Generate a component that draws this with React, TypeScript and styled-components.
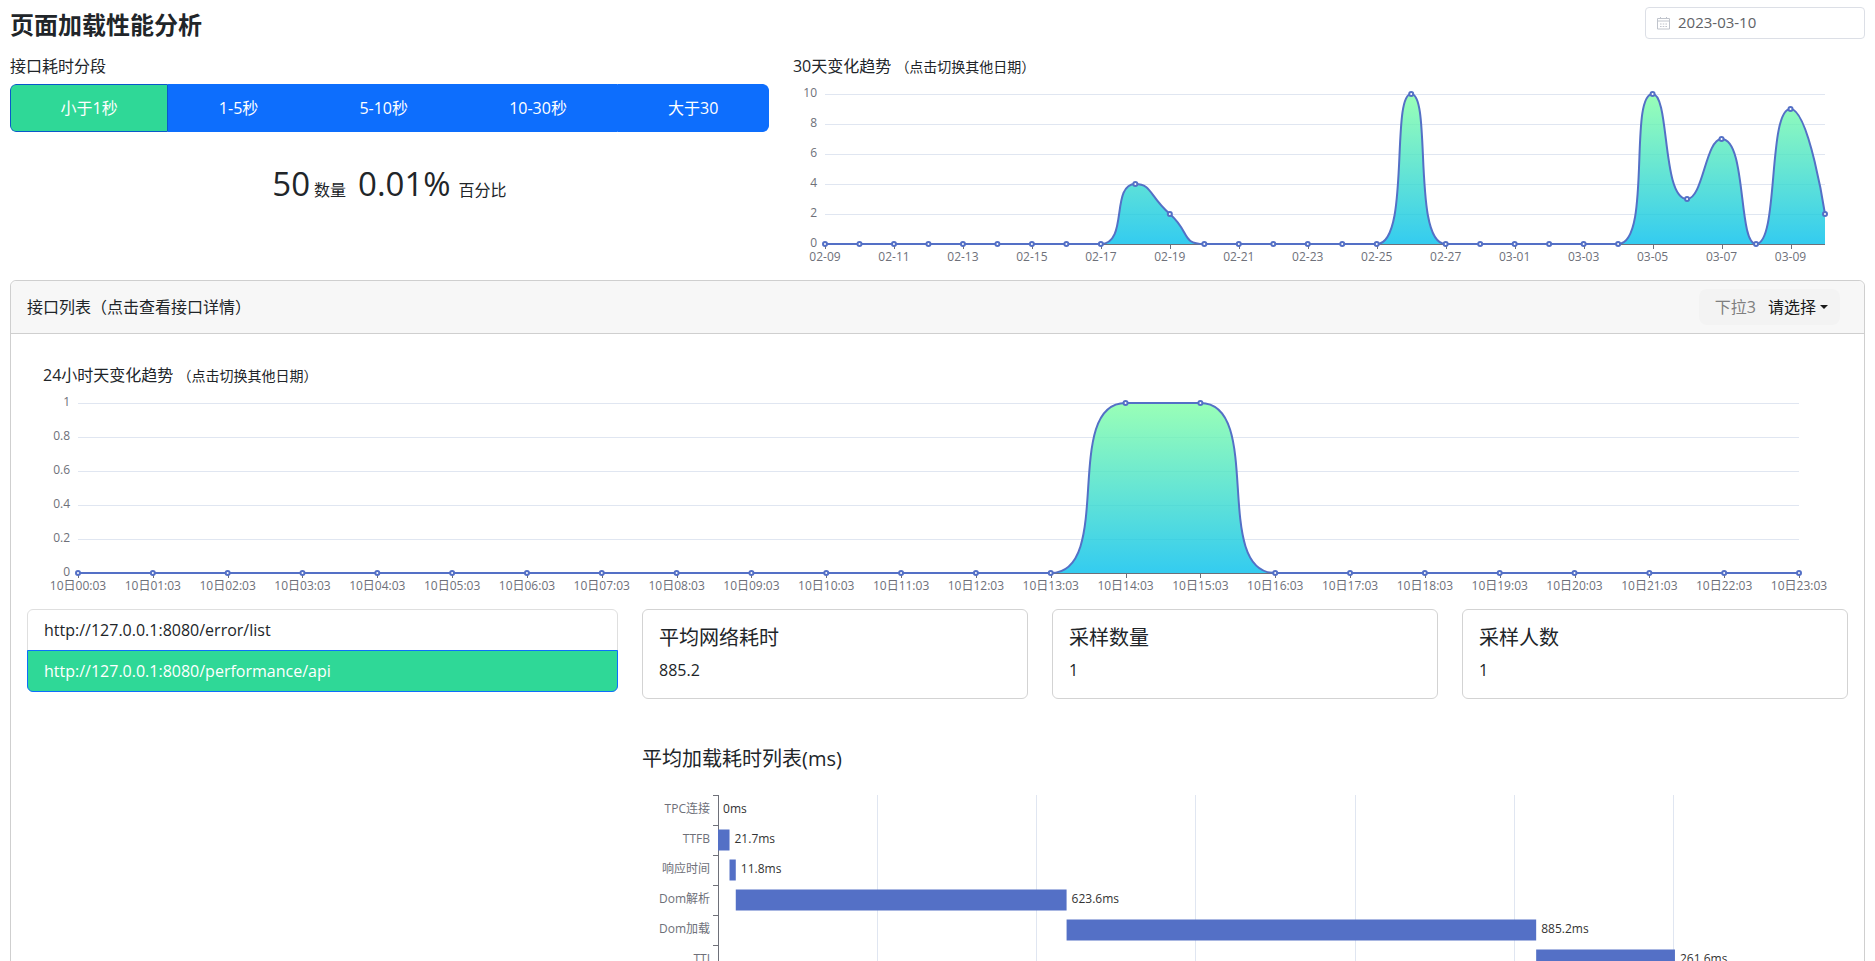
import React, { useId, useLayoutEffect, useRef, useState } from 'react';
import styled, { createGlobalStyle, css } from 'styled-components';

const GlobalStyle = createGlobalStyle`
  *, *::before, *::after { box-sizing: border-box; }
  body {
    margin: 0;
    background: #fff;
    color: #212529;
    font-family: "Open Sans", "Noto Sans CJK SC", sans-serif;
    font-size: 16px;
    line-height: 24px;
  }
  h1, h2, h3, p, ul, dl, dd { margin: 0; padding: 0; }
  button, input, select { font: inherit; color: inherit; }
`;

const chartFont = css`
  font-family: "Open Sans", "Noto Sans CJK SC", sans-serif;
  font-size: 12px;
`;

const Page = styled.main`
  height: 100vh;
  overflow-y: auto;
  scrollbar-width: none;
  padding: 7px 10px 0;
`;

const TopBar = styled.header`
  display: flex;
  align-items: flex-start;
  justify-content: space-between;
`;

const PageTitle = styled.h1`
  padding-top: 4px;
  font-size: 24px;
  font-weight: 700;
  line-height: 28px;
`;

const DateBox = styled.label`
  display: flex;
  align-items: center;
  gap: 8px;
  width: 220px;
  height: 32px;
  padding: 0 11px;
  border: 1px solid #dcdfe6;
  border-radius: 4px;
  color: #606266;
  font-size: 15px;
`;

const DateInput = styled.input`
  flex: 1;
  min-width: 0;
  padding: 0 0 2px;
  border: 0;
  outline: 0;
  background: transparent;
  line-height: 20px;
`;

const Row = styled.div`
  display: flex;
  margin: 0 -12px;
`;

const Col = styled.section<{ $span: number }>`
  flex: 0 0 calc(100% * ${p => p.$span} / 12);
  min-width: 0;
  padding: 0 12px;
`;

const Overview = styled(Row)`
  padding-top: 15px;
`;

const SectionLabel = styled.h2`
  font-size: 16px;
  font-weight: 400;
  line-height: 24px;
  white-space: nowrap;
`;

const Hint = styled.small`
  font-size: 14px;
`;

const Segments = styled.div`
  display: flex;
  margin-top: 6px;
  border-radius: 6px;
  overflow: hidden;
`;

const Segment = styled.button<{ $active?: boolean }>`
  flex: 1 1 auto;
  height: 48px;
  padding: 0;
  border: 1px solid ${p => (p.$active ? '#0a58ca' : '#0d6efd')};
  background: ${p => (p.$active ? '#2fd897' : '#0d6efd')};
  color: #fff;
  cursor: pointer;
  &:first-child { border-radius: 6px 0 0 6px; }
  &:last-child { border-radius: 0 6px 6px 0; }
`;

const Totals = styled.div`
  display: flex;
  align-items: baseline;
  justify-content: center;
  gap: 12px;
  margin-top: 28px;
  line-height: 48px;
`;

const Total = styled.p<{ $gap: number }>`
  display: flex;
  align-items: baseline;
  gap: ${p => p.$gap}px;
`;

const Figure = styled.span`
  font-size: 33px;
`;

const Plot = styled.svg`
  display: block;
  width: 100%;
  text { ${chartFont} fill: #6e7079; }
  text.value { fill: #333; }
`;

const Panel = styled.section`
  margin-top: 8px;
  border: 1px solid #cfcfcf;
  border-radius: 6px;
`;

const PanelHeader = styled.header`
  display: flex;
  align-items: center;
  justify-content: space-between;
  padding: 8px 24px 8px 16px;
  border-bottom: 1px solid #cfcfcf;
  border-radius: 6px 6px 0 0;
  background: #f7f7f7;
`;

const Picker = styled.div`
  display: flex;
  align-items: center;
  height: 36px;
  padding: 0 12px 0 16px;
  border-radius: 8px;
  background: #f3f3f3;
`;

const PickerLabel = styled.label`
  padding-right: 12px;
  color: #7f7f7f;
`;

const PickerSelect = styled.select`
  appearance: none;
  padding: 0;
  border: 0;
  background: transparent;
  color: #1a1a1a;
  cursor: pointer;
`;

const Caret = styled.span`
  margin-left: 3px;
  border: 4px solid transparent;
  border-top-color: #1a1a1a;
  border-bottom: 0;
  pointer-events: none;
`;

const PanelBody = styled.div`
  padding: 29px 16px 16px;
`;

const HourlyTrend = styled.div`
  padding: 0 16px;
`;

const Details = styled(Row)`
  padding-top: 8px;
`;

const UrlList = styled.ul`
  list-style: none;
  border: 1px solid #dfdfdf;
  border-radius: 6px;
`;

const UrlItem = styled.li<{ $active?: boolean }>`
  ${p => p.$active && css`
    margin: 0 -1px -1px;
    border: 1px solid #0d6efd;
    border-radius: 0 0 6px 6px;
    background: #2fd897;
    color: #fff;
  `}
`;

const UrlLink = styled.a`
  display: block;
  padding: 8px 16px;
  color: inherit;
  text-decoration: none;
`;

const Cards = styled.dl`
  display: grid;
  grid-template-columns: repeat(3, 1fr);
  gap: 24px;
`;

const Card = styled.div`
  padding: 16px;
  border: 1px solid #d3d3d3;
  border-radius: 6px;
`;

const CardTitle = styled.dt`
  margin-bottom: 8px;
  font-size: 20px;
`;

const CardValue = styled.dd`
  font-size: 16px;
`;

const ListTitle = styled.h3`
  margin: 48px 0 24px;
  font-size: 20px;
  font-weight: 400;
`;

function useWidth(initial: number) {
  const ref = useRef<SVGSVGElement>(null);
  const [width, setWidth] = useState(initial);
  useLayoutEffect(() => {
    const el = ref.current;
    if (!el) return;
    const read = () => setWidth(Math.round(el.getBoundingClientRect().width));
    read();
    const watcher = new ResizeObserver(read);
    watcher.observe(el);
    return () => watcher.disconnect();
  }, []);
  return [ref, width] as const;
}

type Point = [number, number];

const SMOOTH = 0.6;

const clamp = (v: number, a: number, b: number) =>
  Math.max(Math.min(v, Math.max(a, b)), Math.min(a, b));

/* Smooth curve whose control points stay inside the box of each segment. */
function smoothPath(points: Point[]) {
  let d = `M${points[0][0]} ${points[0][1]}`;
  let [c0x, c0y] = points[0];
  for (let i = 1; i < points.length; i++) {
    const [px, py] = points[i - 1];
    const [x, y] = points[i];
    let c1x = x;
    let c1y = y;
    let n0x = x;
    let n0y = y;
    if (i < points.length - 1) {
      const [nx, ny] = points[i + 1];
      const before = Math.hypot(x - px, y - py);
      const after = Math.hypot(nx - x, ny - y);
      const ratio = after / (after + before);
      n0x = clamp(x + (nx - px) * SMOOTH * ratio, x, nx);
      n0y = clamp(y + (ny - py) * SMOOTH * ratio, y, ny);
      c1x = clamp(x - ((n0x - x) * before) / after, px, x);
      c1y = clamp(y - ((n0y - y) * before) / after, py, y);
      n0x = x + ((x - c1x) * after) / before;
      n0y = y + ((y - c1y) * after) / before;
    }
    d += `C${c0x} ${c0y} ${c1x} ${c1y} ${x} ${y}`;
    c0x = n0x;
    c0y = n0y;
  }
  return d;
}

interface TrendProps {
  title: string;
  labels: string[];
  values: number[];
  ticks: number[];
  step: number;
  every: number;
  left: number;
  right: number;
}

function TrendChart({ title, labels, values, ticks, step, every, left, right }: TrendProps) {
  const [ref, width] = useWidth(1000);
  const gradient = useId();
  const top = 15;
  const base = top + step * (ticks.length - 1);
  const max = ticks[ticks.length - 1];
  const end = width - right;
  const xAt = (i: number) => left + ((end - left) * i) / (values.length - 1);
  const points = values.map((v, i): Point => [xAt(i), base - ((base - top) * v) / max]);
  const line = smoothPath(points);
  return (
    <Plot ref={ref} height={base + 28} role="img" aria-label={title}>
      <defs>
        <linearGradient id={gradient} x1="0" y1="0" x2="0" y2="1">
          <stop offset="0" stopColor="#80ffa5" />
          <stop offset="1" stopColor="#01bfec" />
        </linearGradient>
      </defs>
      {ticks.map((t, i) => (
        <g key={t}>
          <text x={left - 8} y={base - i * step + 3} textAnchor="end">{t}</text>
          <line x1={left} x2={end} y1={base - i * step + 0.5} y2={base - i * step + 0.5} stroke={i ? '#e0e6f1' : '#6e7079'} />
        </g>
      ))}
      {labels.map((label, i) => i % every === 0 && (
        <g key={label}>
          <line x1={Math.round(xAt(i)) + 0.5} x2={Math.round(xAt(i)) + 0.5} y1={base} y2={base + 5} stroke="#6e7079" />
          <text x={xAt(i)} y={base + 17} textAnchor="middle">{label}</text>
        </g>
      ))}
      <path d={`${line}L${end} ${base}L${left} ${base}Z`} fill={`url(#${gradient})`} opacity="0.8" />
      <path d={line} fill="none" stroke="#5470c6" strokeWidth="2" />
      {points.map(([x, y], i) => (
        <circle key={labels[i]} cx={x} cy={y} r="2" fill="#fff" stroke="#5470c6" strokeWidth="2" />
      ))}
    </Plot>
  );
}

const stages = [
  { name: 'TPC连接', ms: 0 },
  { name: 'TTFB', ms: 21.7 },
  { name: '响应时间', ms: 11.8 },
  { name: 'Dom解析', ms: 623.6 },
  { name: 'Dom加载', ms: 885.2 },
  { name: 'TTI', ms: 261.6 },
];

function WaterfallChart() {
  const [ref, width] = useWidth(1206);
  const axis = 76;
  const rowHeight = 30;
  const height = stages.length * rowHeight;
  const scale = (width - axis - 173) / 1804;
  let total = 0;
  const bars = stages.map(stage => {
    const start = total;
    total += stage.ms;
    return { ...stage, start };
  });
  return (
    <Plot ref={ref} height={height + 2} role="img" aria-label="平均加载耗时列表">
      {[300, 600, 900, 1200, 1500, 1800].map(ms => {
        const x = Math.round(axis + ms * scale) + 0.5;
        return <line key={ms} x1={x} x2={x} y1="0" y2={height} stroke="#e0e6f1" />;
      })}
      <line x1={axis + 0.5} x2={axis + 0.5} y1="0" y2={height + 1} stroke="#6e7079" />
      {bars.map((bar, i) => {
        const middle = i * rowHeight + 15;
        const x = axis + bar.start * scale;
        return (
          <g key={bar.name}>
            <line x1={axis - 5} x2={axis} y1={i * rowHeight + 0.5} y2={i * rowHeight + 0.5} stroke="#6e7079" />
            <text x={axis - 8} y={middle + 3} textAnchor="end">{bar.name}</text>
            <rect x={x} y={middle - 10.5} width={bar.ms * scale} height="21" fill="#5470c6" />
            <text className="value" x={x + bar.ms * scale + 5} y={middle + 3}>{bar.ms}ms</text>
          </g>
        );
      })}
    </Plot>
  );
}

function CalendarIcon() {
  return (
    <svg width="13" height="14" viewBox="0 0 13 14" fill="none" stroke="#c0c4cc" aria-hidden="true">
      <path d="M.5 2.5h12v10.5H.5zM.5 5h12M3.5 1v2M9.5 1v2" />
      <path d="M3 8h7M3 10.5h7" strokeDasharray="1.6 1.1" />
    </svg>
  );
}

const pad = (n: number) => String(n).padStart(2, '0');

const days = Array.from({ length: 30 }, (_, i) => (i < 20 ? `02-${pad(i + 9)}` : `03-${pad(i - 19)}`));
const dayCounts: Record<string, number> = {
  '02-18': 4, '02-19': 2, '02-26': 10, '03-05': 10, '03-06': 3, '03-07': 7, '03-09': 9, '03-10': 2,
};
const hours = Array.from({ length: 24 }, (_, i) => `10日${pad(i)}:03`);
const hourCounts = hours.map((_, i) => (i === 14 || i === 15 ? 1 : 0));

const segments = ['小于1秒', '1-5秒', '5-10秒', '10-30秒', '大于30'];
const urls = ['http://127.0.0.1:8080/error/list', 'http://127.0.0.1:8080/performance/api'];
const metrics = [
  { name: '平均网络耗时', value: '885.2' },
  { name: '采样数量', value: '1' },
  { name: '采样人数', value: '1' },
];

export default function App() {
  const [segment, setSegment] = useState(0);
  const [url, setUrl] = useState(1);
  const [date, setDate] = useState('2023-03-10');
  return (
    <>
      <GlobalStyle />
      <Page>
        <TopBar>
          <PageTitle>页面加载性能分析</PageTitle>
          <DateBox>
            <CalendarIcon />
            <DateInput aria-label="日期" value={date} onChange={e => setDate(e.target.value)} />
          </DateBox>
        </TopBar>

        <Overview>
          <Col $span={5}>
            <SectionLabel>接口耗时分段</SectionLabel>
            <Segments>
              {segments.map((name, i) => (
                <Segment key={name} type="button" $active={i === segment} onClick={() => setSegment(i)}>{name}</Segment>
              ))}
            </Segments>
            <Totals>
              <Total $gap={4}><Figure>50</Figure>数量</Total>
              <Total $gap={8}><Figure>0.01%</Figure>百分比</Total>
            </Totals>
          </Col>
          <Col $span={7}>
            <SectionLabel>30天变化趋势 <Hint>（点击切换其他日期）</Hint></SectionLabel>
            <TrendChart
              title="30天变化趋势"
              labels={days}
              values={days.map(day => dayCounts[day] ?? 0)}
              ticks={[0, 2, 4, 6, 8, 10]}
              step={30}
              every={2}
              left={32}
              right={40}
            />
          </Col>
        </Overview>

        <Panel>
          <PanelHeader>
            <SectionLabel>接口列表（点击查看接口详情）</SectionLabel>
            <Picker>
              <PickerLabel htmlFor="picker">下拉3</PickerLabel>
              <PickerSelect id="picker"><option>请选择</option></PickerSelect>
              <Caret />
            </Picker>
          </PanelHeader>
          <PanelBody>
            <HourlyTrend>
              <SectionLabel>24小时天变化趋势 <Hint>（点击切换其他日期）</Hint></SectionLabel>
              <TrendChart
                title="24小时天变化趋势"
                labels={hours}
                values={hourCounts}
                ticks={[0, 0.2, 0.4, 0.6, 0.8, 1]}
                step={34}
                every={1}
                left={35}
                right={33}
              />
            </HourlyTrend>
            <Details>
              <Col $span={4}>
                <UrlList>
                  {urls.map((address, i) => (
                    <UrlItem key={address} $active={i === url}>
                      <UrlLink href="#" onClick={e => { e.preventDefault(); setUrl(i); }}>{address}</UrlLink>
                    </UrlItem>
                  ))}
                </UrlList>
              </Col>
              <Col $span={8}>
                <Cards>
                  {metrics.map(metric => (
                    <Card key={metric.name}>
                      <CardTitle>{metric.name}</CardTitle>
                      <CardValue>{metric.value}</CardValue>
                    </Card>
                  ))}
                </Cards>
                <ListTitle>平均加载耗时列表(ms)</ListTitle>
                <WaterfallChart />
              </Col>
            </Details>
          </PanelBody>
        </Panel>
      </Page>
    </>
  );
}
